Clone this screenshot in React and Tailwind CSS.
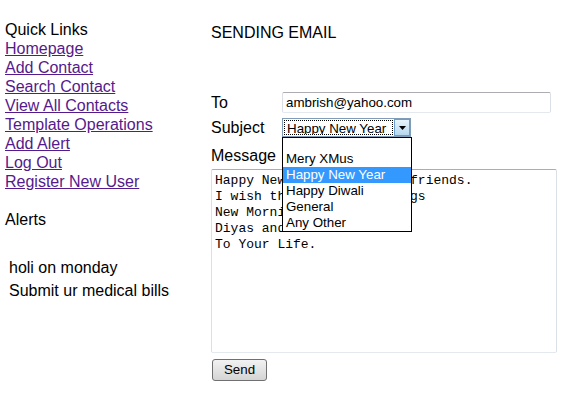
import React from 'react';

const links = [
  'Homepage',
  'Add Contact',
  'Search Contact',
  'View All Contacts',
  'Template Operations',
  'Add Alert',
  'Log Out',
  'Register New User',
];

const options = ['Mery XMus', 'Happy New Year', 'Happy Diwali', 'General', 'Any Other'];

const message = `Happy New Year to all my friends.
I wish this New Year brings
New Morning, New Hopes,
Diyas and Candles
To Your Life.`;

const App = () => {
  return (
    <div className="min-h-screen bg-white text-black flex font-['Liberation_Sans',Arial,sans-serif] text-[16px] leading-[19px]">
      {/* Quick links + alerts */}
      <div className="w-[211px] shrink-0 pl-[5px] pt-[20px]">
        <div>Quick Links</div>
        {links.map((l) => (
          <div key={l}>
            <a href="#" className="text-[#551a8b] underline">
              {l}
            </a>
          </div>
        ))}
        <div className="h-[19px]" />
        <div>Alerts</div>
        <div className="mt-[27px] pl-[4px]">
          <div className="leading-[23px]">holi on monday</div>
          <div className="leading-[23px]">Submit ur medical bills</div>
        </div>
      </div>

      {/* Email form */}
      <div className="pt-[23px]">
        <div>SENDING EMAIL</div>

        <div className="mt-[50px] flex items-center">
          <div className="w-[71px]">To</div>
          <div className="w-[269px] h-[21px] border border-t-[#abadb3] border-x-[#dbdfe6] border-b-[#e3e9ef] rounded-[2px] px-[3px] text-[13.33px] leading-[19px]">
            ambrish@yahoo.com
          </div>
        </div>

        <div className="mt-[5px] flex items-center">
          <div className="w-[71px]">Subject</div>
          <div className="relative w-[129px] h-[19px] border border-[#7f9db9] flex text-[13.33px] leading-[15px]">
            <div className="flex-1 m-[1px] border border-dotted border-black pl-[2px] overflow-hidden whitespace-nowrap">
              Happy New Year
            </div>
            <div className="w-[16px] h-[17px] bg-gradient-to-b from-[#e8f4fc] to-[#b6d7ef] border border-[#6a9ed0] flex items-center justify-center">
              <svg width="7" height="4" viewBox="0 0 7 4">
                <path d="M0 0h7L3.5 4z" fill="#000" />
              </svg>
            </div>
            <div className="absolute left-[-1px] top-[18px] w-[130px] border border-black bg-white z-10 leading-[16px]">
              <div className="h-[13px]" />
              {options.map((o) => (
                <div
                  key={o}
                  className={
                    'h-[16px] pl-[3px] whitespace-nowrap ' +
                    (o === 'Happy New Year' ? 'bg-[#3399ff] text-white' : '')
                  }
                >
                  {o}
                </div>
              ))}
            </div>
          </div>
        </div>

        <div className="mt-[9px]">Message</div>
        <div className="mt-[4px] w-[346px] h-[184px] border border-t-[#abadb3] border-x-[#dbdfe6] border-b-[#e3e9ef] rounded-[2px] px-[3px] pt-[3px] font-['Liberation_Mono','Courier_New',monospace] text-[13px] leading-[16px] whitespace-pre overflow-hidden">
          {message}
        </div>

        <button className="mt-[6px] ml-[1px] w-[55px] h-[22px] border border-[#707070] rounded-[3px] bg-gradient-to-b from-[#f2f2f2] to-[#d4d4d4] text-[13.33px] leading-[18px]">
          Send
        </button>
      </div>
    </div>
  );
};

export default App;
